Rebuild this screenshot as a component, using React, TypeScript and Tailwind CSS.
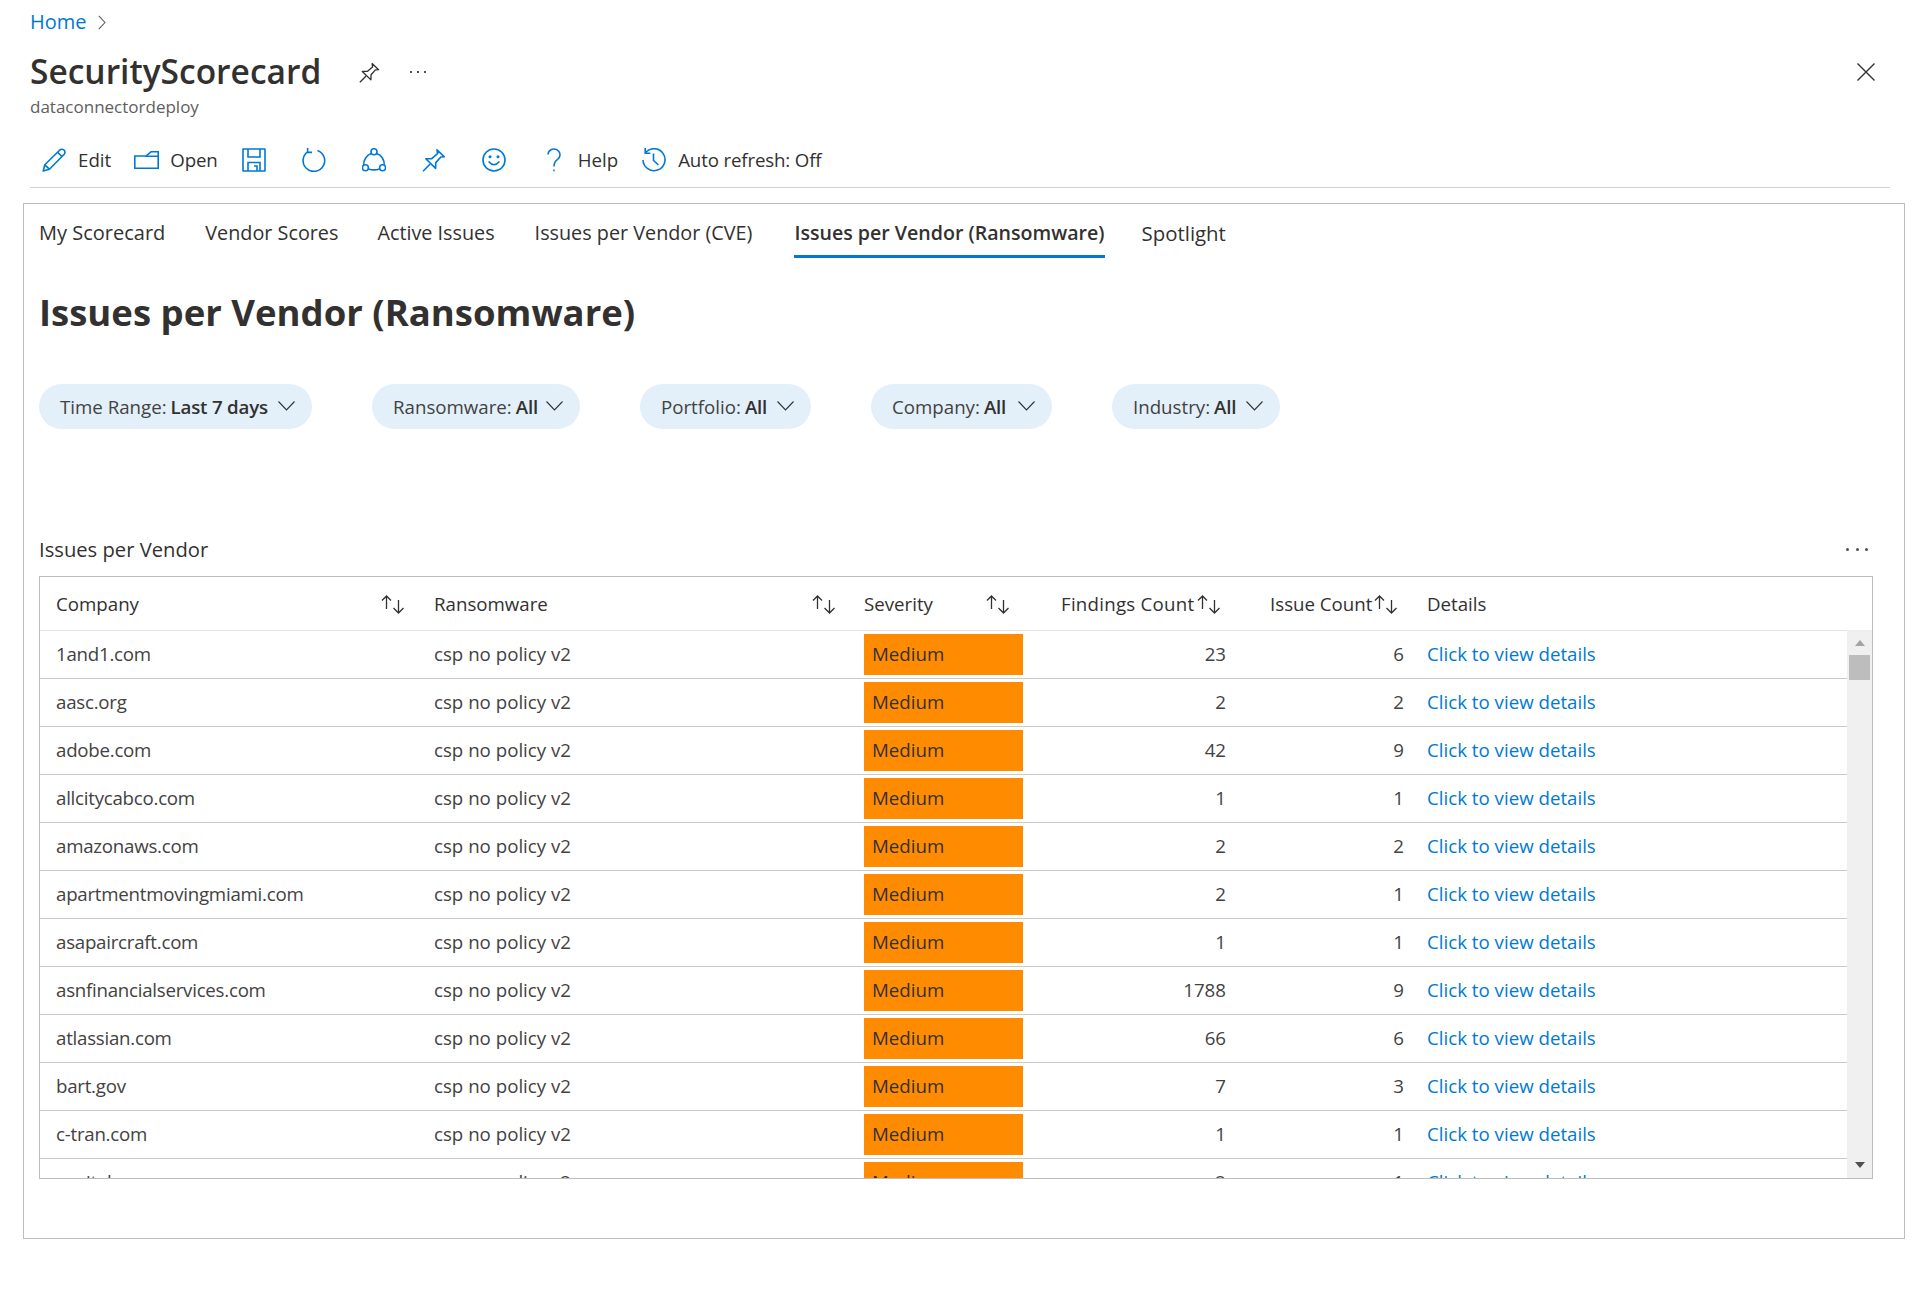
import type { ReactNode } from "react"

type Row = {
    company: string
    findings: number
    issues: number
}

const rows: Row[] = [
    { company: "1and1.com", findings: 23, issues: 6 },
    { company: "aasc.org", findings: 2, issues: 2 },
    { company: "adobe.com", findings: 42, issues: 9 },
    { company: "allcitycabco.com", findings: 1, issues: 1 },
    { company: "amazonaws.com", findings: 2, issues: 2 },
    { company: "apartmentmovingmiami.com", findings: 2, issues: 1 },
    { company: "asapaircraft.com", findings: 1, issues: 1 },
    { company: "asnfinancialservices.com", findings: 1788, issues: 9 },
    { company: "atlassian.com", findings: 66, issues: 6 },
    { company: "bart.gov", findings: 7, issues: 3 },
    { company: "c-tran.com", findings: 1, issues: 1 },
    { company: "capitalone.com", findings: 2, issues: 1 },
]

const tabs = [
    { label: "My Scorecard", margin: "mr-[40px] text-[20px]" },
    { label: "Vendor Scores", margin: "mr-[39px]" },
    { label: "Active Issues", margin: "mr-[40px]" },
    { label: "Issues per Vendor (CVE)", margin: "mr-[42px]" },
]

const filters = [
    { label: "Time Range:", value: "Last 7 days", width: "w-[273px]" },
    { label: "Ransomware:", value: "All", width: "w-[208px]" },
    { label: "Portfolio:", value: "All", width: "w-[171px]" },
    { label: "Company:", value: "All", width: "w-[181px]" },
    { label: "Industry:", value: "All", width: "w-[168px]" },
]

const gridCols = "grid grid-cols-[394px_430px_159px_203px_178px_443px]"

function ToolIcon({ children, className }: { children: ReactNode; className?: string }) {
    return (
        <svg
            viewBox="0 0 24 24"
            fill="none"
            stroke="#0078d4"
            strokeWidth="1.6"
            className={className ?? "w-[24px] h-[24px] shrink-0"}
        >
            {children}
        </svg>
    )
}

function PinShape() {
    return (
        <>
            <path d="M1 23.2 L8.2 16" />
            <path d="M3.8 10.8 L9.8 10.6 L15.5 5.6 L15 1.8 L22.4 8.8 L18.8 9 L13.8 14.6 L13.6 20.4 Z" strokeLinejoin="round" />
        </>
    )
}

function SortIcon() {
    return (
        <svg viewBox="0 0 24 20" fill="none" stroke="#323130" strokeWidth="1.3" className="w-[24px] h-[20px] shrink-0">
            <path d="M5.5 15 V2 M1 6.5 L5.5 2 L10 6.5" />
            <path d="M17.5 6 V19 M12.5 14 L17.5 19 L22.5 14" />
        </svg>
    )
}

export default function App() {
    return (
        <div className="w-full h-[1299px] bg-white text-[#323130] font-['Open_Sans',sans-serif] text-[18.7px] overflow-hidden">
            <div className="h-[44px] pl-[30px] flex items-center gap-[11px]">
                <span className="text-[20px] text-[#0078d4]">Home</span>
                <svg viewBox="0 0 8 15" fill="none" stroke="#605e5c" strokeWidth="1.1" className="w-[8px] h-[15px]">
                    <path d="M0.8 0.8 L7 7.5 L0.8 14.2" />
                </svg>
            </div>

            <div className="h-[56px] pl-[30px] pr-[45px] flex items-center">
                <h2 className="mb-[2px] text-[33.5px] font-semibold leading-[44px]">SecurityScorecard</h2>
                <svg viewBox="0 0 24 24" fill="none" stroke="#323130" strokeWidth="1.5" className="ml-[38px] w-[21px] h-[21px]">
                    <PinShape />
                </svg>
                <div className="ml-[30px] flex gap-[5px]">
                    <span className="w-[2px] h-[2px] bg-[#505050]" />
                    <span className="w-[2px] h-[2px] bg-[#505050]" />
                    <span className="w-[2px] h-[2px] bg-[#505050]" />
                </div>
                <svg viewBox="0 0 18 18" stroke="#323130" strokeWidth="1.4" className="ml-auto w-[18px] h-[18px]">
                    <path d="M0.5 0.5 L17.5 17.5 M17.5 0.5 L0.5 17.5" />
                </svg>
            </div>

            <div className="pl-[30px] h-[14px] flex items-center text-[17px] text-[#605e5c] leading-[14px]">dataconnectordeploy</div>

            <div className="ml-[30px] mr-[30px] mt-[22px] h-[52px] pb-[4px] border-b border-[#d2d2d2] flex items-center pl-[12px]">
                <ToolIcon>
                    <path d="M1.2 23 L2.8 16.8 L17.8 2 Q20 0.4 22 2 Q23.8 4 22.2 6.2 L7.4 21.2 Z" strokeLinejoin="round" />
                    <path d="M2.8 16.8 L7.4 21.2 M15.6 4.2 L20 8.6" />
                </ToolIcon>
                <span className="ml-[12px] mt-[2px]">Edit</span>
                <svg viewBox="0 0 25 18" fill="none" stroke="#0078d4" strokeWidth="1.6" className="ml-[23px] w-[25px] h-[18px]">
                    <path d="M0.8 5 H12 L17 0.8 H24.2 V17.2 H0.8 Z" />
                    <path d="M12 5 V5.2 H24" />
                </svg>
                <span className="ml-[11px] mt-[2px] tracking-[-0.1px]">Open</span>
                <ToolIcon className="ml-[24px] w-[24px] h-[24px]">
                    <path d="M1 1 H23 V23 H1 Z" strokeLinejoin="round" />
                    <path d="M6 1 V9 H18 V1 M6 23 V14.5 H18 V23 M12 18 H15 V23" />
                </ToolIcon>
                <ToolIcon className="ml-[36px] w-[24px] h-[24px]">
                    <path d="M15.5 2.4 A10.8 10.8 0 1 1 5.6 3.8" />
                    <path d="M5.6 0 V4.4 H10" />
                </ToolIcon>
                <ToolIcon className="ml-[36px] w-[24px] h-[24px]">
                    <circle cx="12" cy="3.8" r="3" />
                    <circle cx="3.4" cy="19.8" r="3" />
                    <circle cx="20.6" cy="19.8" r="3" />
                    <path d="M9.4 5.6 A11 11 0 0 0 1.8 17 M14.6 5.6 A11 11 0 0 1 22.2 17 M6.4 21 Q12 22.8 17.6 21" />
                </ToolIcon>
                <ToolIcon className="ml-[36px] w-[24px] h-[24px]">
                    <PinShape />
                </ToolIcon>
                <ToolIcon className="ml-[36px] w-[24px] h-[24px]">
                    <circle cx="12" cy="12" r="11" />
                    <path d="M6.6 13.5 Q12 20 17.4 13.5" />
                    <circle cx="8" cy="8.8" r="0.7" fill="#0078d4" />
                    <circle cx="16" cy="8.8" r="0.7" fill="#0078d4" />
                </ToolIcon>
                <svg viewBox="0 0 14 24" fill="none" stroke="#0078d4" strokeWidth="1.5" className="ml-[41px] w-[14px] h-[24px]">
                    <path d="M1 6.6 A6 5.8 0 1 1 10.6 11.4 C7.6 13.4 7 15 7 18.4" />
                    <path d="M7 21.6 V23.2" />
                </svg>
                <span className="ml-[17px] mt-[2px]">Help</span>
                <ToolIcon className="ml-[24px] w-[24px] h-[24px]">
                    <path d="M3.4 4.8 A11 11 0 1 1 1 12" />
                    <path d="M3.2 0 V5.2 H8.4 M11.5 5.5 V12.5 L16.5 17" />
                </ToolIcon>
                <span className="ml-[12px] mt-[2px] tracking-[-0.15px]">Auto refresh: Off</span>
            </div>

            <div className="ml-[23px] mt-[15px] w-[1882px] h-[1036px] border border-[#bdbdbd] pl-[15px] pr-[30px]">
                <div className="h-[54px] flex text-[19.8px]">
                    {tabs.map((tab) => (
                        <div key={tab.label} className={`h-full flex items-center pt-[4px] ${tab.margin}`}>
                            {tab.label}
                        </div>
                    ))}
                    <div className="h-full flex items-center text-[19.6px] font-semibold border-b-[3px] border-[#0078d4] pt-[7px]">
                        Issues per Vendor (Ransomware)
                    </div>
                    <div className="h-full flex items-center pt-[4px] ml-[37px] text-[20.4px]">Spotlight</div>
                </div>

                <h1 className="mt-[29px] text-[36.5px] font-bold leading-[50px]">Issues per Vendor (Ransomware)</h1>

                <div className="mt-[47px] flex gap-[60px]">
                    {filters.map((f) => (
                        <div key={f.label} className={`${f.width} h-[45px] rounded-full bg-[#e3f0fa] pl-[21px] pr-[17px] pt-[1px] flex items-center text-[#424242]`}>
                            <span>{f.label}</span>
                            <span className="ml-[4px] font-semibold tracking-[-0.2px] text-[#323130]">{f.value}</span>
                            <svg viewBox="0 0 17 10" fill="none" stroke="#323130" strokeWidth="1.1" className="ml-auto mb-[2px] w-[17px] h-[10px]">
                                <path d="M0.5 0.5 L8.5 9 L16.5 0.5" />
                            </svg>
                        </div>
                    ))}
                </div>

                <div className="mt-[101px] h-[38px] flex items-center justify-between pr-[6px]">
                    <span className="text-[20.2px]">Issues per Vendor</span>
                    <div className="flex gap-[6.5px]">
                        <span className="w-[3px] h-[3px] rounded-full bg-[#505050]" />
                        <span className="w-[3px] h-[3px] rounded-full bg-[#505050]" />
                        <span className="w-[3px] h-[3px] rounded-full bg-[#505050]" />
                    </div>
                </div>

                <div className="mt-[8px] w-[1834px] h-[603px] border border-[#bdbdbd] flex flex-col">
                    <div className={`${gridCols} h-[53px] shrink-0 items-center font-medium pt-[2px]`}>
                        <div className="flex items-center justify-between pl-[16px] pr-[29px]">
                            <span>Company</span>
                            <SortIcon />
                        </div>
                        <div className="flex items-center justify-between pr-[28px]">
                            <span>Ransomware</span>
                            <SortIcon />
                        </div>
                        <div className="flex items-center justify-between pr-[13px]">
                            <span>Severity</span>
                            <SortIcon />
                        </div>
                        <div className="flex items-center justify-between pl-[38px] pr-[5px]">
                            <span className="tracking-[0.25px]">Findings Count</span>
                            <SortIcon />
                        </div>
                        <div className="flex items-center justify-between pl-[44px] pr-[6px]">
                            <span>Issue Count</span>
                            <SortIcon />
                        </div>
                        <div className="pl-[23px]">Details</div>
                    </div>

                    <div className="flex flex-1 min-h-0">
                        <div className="w-[1807px] overflow-hidden border-t border-[#e4e2e0]">
                            {rows.map((r) => (
                                <div key={r.company} className={`${gridCols} h-[48px] items-center border-b border-[#c8c8c8] text-[#424242]`}>
                                    <div className="pl-[16px] tracking-[-0.25px]">{r.company}</div>
                                    <div>csp no policy v2</div>
                                    <div className="h-[41px] pl-[8px] bg-[#ff8c00] flex items-center text-[#323130]">Medium</div>
                                    <div className="text-right">{r.findings}</div>
                                    <div className="text-right">{r.issues}</div>
                                    <div className="pl-[23px] text-[#0078d4]">Click to view details</div>
                                </div>
                            ))}
                        </div>
                        <div className="w-[25px] bg-[#f0f0f0] flex flex-col items-center">
                            <div className="h-[25px] shrink-0 flex items-center justify-center">
                                <span className="border-x-[5px] border-x-transparent border-b-[6px] border-b-[#a3a3a3]" />
                            </div>
                            <div className="w-[21px] h-[25px] bg-[#bdbdbd]" />
                            <div className="mt-auto h-[26px] flex items-center justify-center">
                                <span className="border-x-[5px] border-x-transparent border-t-[6px] border-t-[#505050]" />
                            </div>
                        </div>
                    </div>
                </div>
            </div>
        </div>
    )
}
